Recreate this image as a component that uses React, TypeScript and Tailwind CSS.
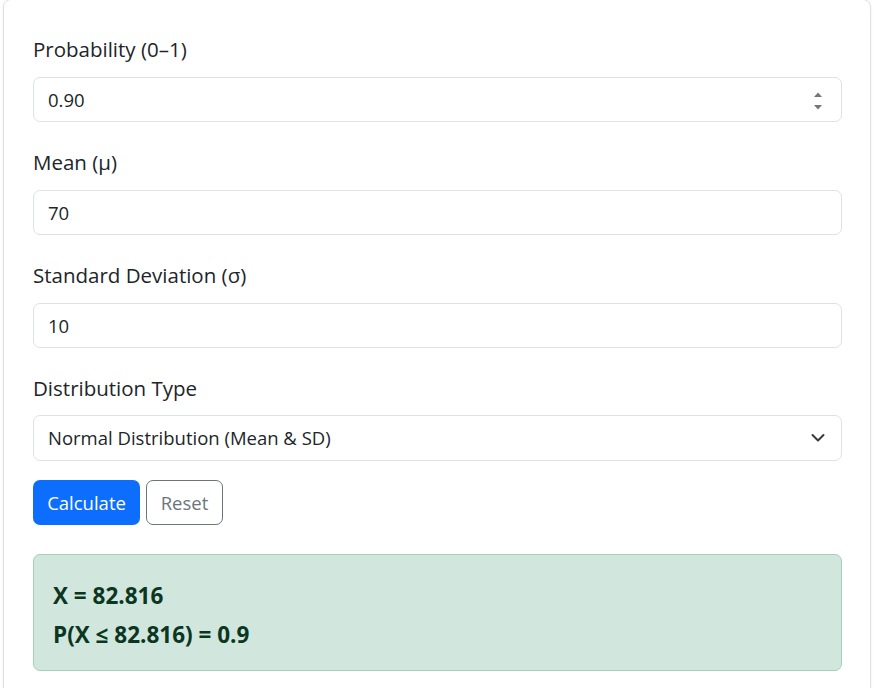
import React from "react";

function Field({ label, value, spinner }: { label: string; value: string; spinner?: boolean }) {
  return (
    <div className="mb-[25px]">
      <div className="text-[20.5px] leading-[30px] text-[#212529] mb-[13px]">{label}</div>
      <div className="relative h-[45px] border border-[#dee2e6] rounded-[7px] bg-white flex items-center pl-[14px] text-[18.5px] text-[#212529]">
        {value}
        {spinner && (
          <svg className="absolute right-[17px] top-[13px]" width="12" height="20" viewBox="0 0 12 20">
            <path d="M2 6 L6 1.5 L10 6 Z" fill="#757575" />
            <path d="M2 14 L6 18.5 L10 14 Z" fill="#757575" />
          </svg>
        )}
      </div>
    </div>
  );
}

export default function App() {
  return (
    <div className="w-[875px] h-[688px] bg-white overflow-hidden pl-[3px] pr-[4px]" style={{ fontFamily: '"Open Sans", "Noto Sans", sans-serif' }}>
      <div className="h-[700px] -mt-[1px] border border-[#dee2e6] rounded-[8px] bg-white shadow-[0_1px_3px_rgba(0,0,0,0.08)] pl-[29px] pr-[28px] pt-[34px]">
        <Field label="Probability (0–1)" value="0.90" spinner />
        <Field label="Mean (μ)" value="70" />
        <Field label="Standard Deviation (σ)" value="10" />
        <div className="mb-[19px]">
          <div className="text-[20.5px] leading-[30px] text-[#212529] mb-[12px]">Distribution Type</div>
          <div className="relative h-[46px] border border-[#dee2e6] rounded-[7px] bg-white flex items-center pl-[14px] text-[18.5px] text-[#212529]">
            Normal Distribution (Mean &amp; SD)
            <svg className="absolute right-[16px] top-[17px]" width="14" height="10" viewBox="0 0 14 10">
              <path d="M1.5 2 L7 7.5 L12.5 2" fill="none" stroke="#343a40" strokeWidth="2" strokeLinecap="round" strokeLinejoin="round" />
            </svg>
          </div>
        </div>
        <div className="flex gap-[6px] mb-[29px]">
          <div className="w-[107px] h-[45px] rounded-[7px] bg-[#0d6efd] text-white text-[18.5px] flex items-center justify-center">Calculate</div>
          <div className="w-[77px] h-[45px] rounded-[7px] border border-[#6c757d] text-[#6c757d] text-[18.5px] flex items-center justify-center">Reset</div>
        </div>
        <div className="h-[117px] border border-[#a3cfbb] bg-[#d1e7dd] rounded-[7px] px-[19px] pt-[21px] text-[#0a3622] font-bold text-[22.5px]">
          <div className="leading-[39px]">X = 82.816</div>
          <div className="leading-[39px]">P(X ≤ 82.816) = 0.9</div>
        </div>
      </div>
    </div>
  );
}
